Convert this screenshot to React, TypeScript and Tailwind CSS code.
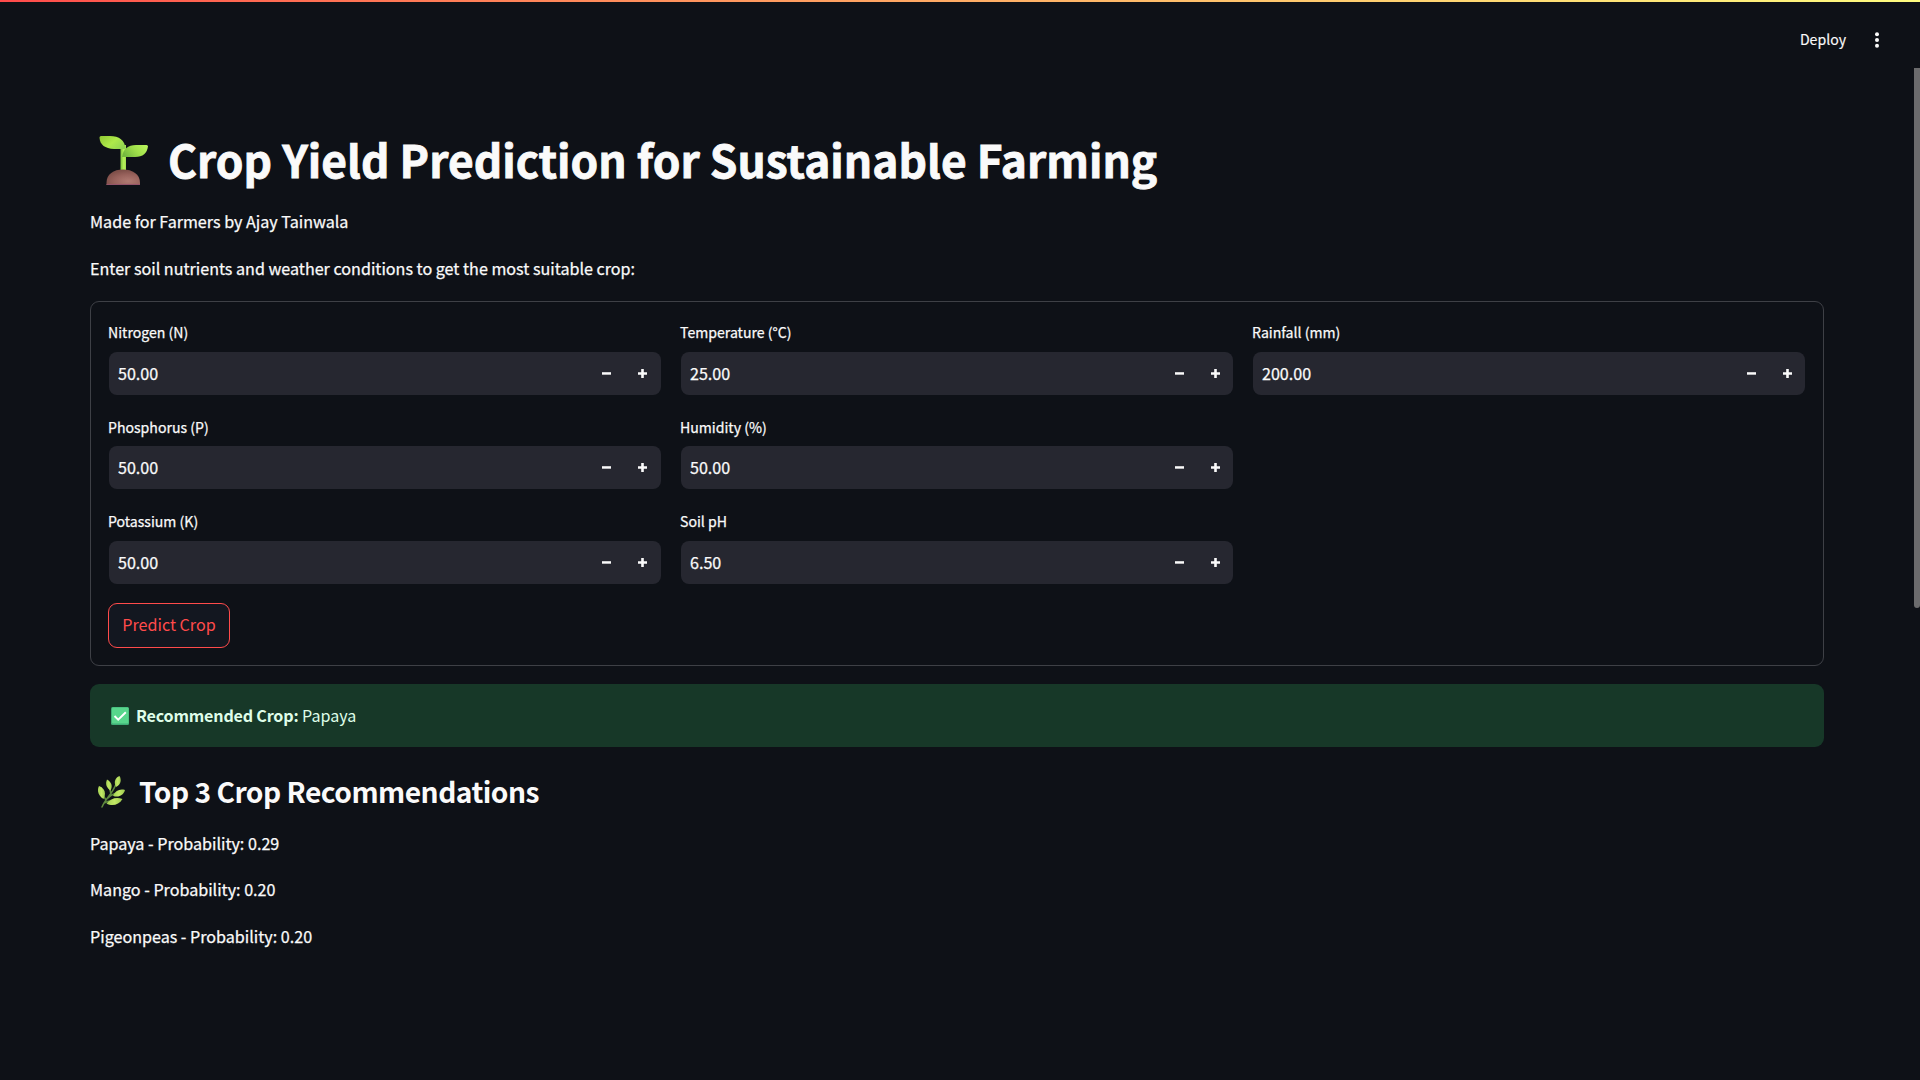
import React from "react";

type Field = { label: string; value: string };

const columns: Field[][] = [
  [
    { label: "Nitrogen (N)", value: "50.00" },
    { label: "Phosphorus (P)", value: "50.00" },
    { label: "Potassium (K)", value: "50.00" },
  ],
  [
    { label: "Temperature (°C)", value: "25.00" },
    { label: "Humidity (%)", value: "50.00" },
    { label: "Soil pH", value: "6.50" },
  ],
  [{ label: "Rainfall (mm)", value: "200.00" }],
];

const recommendations = [
  { crop: "Papaya", probability: "0.29" },
  { crop: "Mango", probability: "0.20" },
  { crop: "Pigeonpeas", probability: "0.20" },
];

function Sprout() {
  return (
    <svg width="49" height="49" viewBox="0 0 49 49" className="ml-[9px] mt-[7px] shrink-0">
      <defs>
        <linearGradient id="leafL" x1="0" y1="0.2" x2="1" y2="0.8">
          <stop offset="0" stopColor="#94cc36" />
          <stop offset="0.5" stopColor="#aeea4a" />
          <stop offset="1" stopColor="#8fd352" />
        </linearGradient>
        <linearGradient id="leafR" x1="0" y1="0.6" x2="1" y2="0.2">
          <stop offset="0" stopColor="#74b83f" />
          <stop offset="0.5" stopColor="#9fe04a" />
          <stop offset="1" stopColor="#b9f45c" />
        </linearGradient>
        <linearGradient id="stem" x1="0" y1="0" x2="1" y2="0">
          <stop offset="0" stopColor="#7cc23c" />
          <stop offset="0.6" stopColor="#b8f25a" />
          <stop offset="1" stopColor="#a2dc50" />
        </linearGradient>
        <radialGradient id="soil" cx="0.65" cy="0.75" r="0.7">
          <stop offset="0" stopColor="#b07a72" />
          <stop offset="0.6" stopColor="#98625c" />
          <stop offset="1" stopColor="#80504a" />
        </radialGradient>
      </defs>
      <rect x="21.500" y="9" width="5.500" height="26" fill="url(#stem)" />
      <path d="M7.500 49V47C7.500 38 14.500 33.500 24 33.500S41 38 41 47V49Z" fill="url(#soil)" />
      <path d="M7.500 48H41V49H7.500Z" fill="#95546a" />
      <path d="M0.500 1.500Q0.500 0 2 0H11C20 0 26 4 26.500 13H15C6 12.500 1 9 0.500 1.500Z" fill="url(#leafL)" />
      <path d="M23 21C24 13 29 9 37 9H47.500Q49 9 49 10.500C48 17 44 21 36 21Z" fill="url(#leafR)" />
    </svg>
  );
}

function Herb() {
  return (
    <svg width="27" height="32" viewBox="0 0 27 32" className="ml-[8px] mt-[4px] shrink-0">
      <defs>
        <linearGradient id="herb" x1="0" y1="0" x2="1" y2="0">
          <stop offset="0" stopColor="#a3d053" />
          <stop offset="0.5" stopColor="#c2e866" />
          <stop offset="1" stopColor="#9cc94e" />
        </linearGradient>
      </defs>
      <path
        d="M4 31C8 22 15 17 18 8M8 24L3 16M13 18L11 10M10 22Q15 17 21 17M6 27Q12 24 17 25"
        fill="none"
        stroke="#5f8a3f"
        strokeWidth="1.500"
        strokeLinecap="round"
      />
      <path d="M21.500 0C24 4 22.500 9 18 11C15.500 6 17 2 21.500 0Z" fill="url(#herb)" />
      <path d="M9 3.500C13.500 6 15 10 12.500 14.500C8.500 12 7 8 9 3.500Z" fill="url(#herb)" />
      <path d="M1 10C7 12 8.500 18 5.500 23C0.500 20 -1.500 14.500 1 10Z" fill="url(#herb)" />
      <path d="M27 14C25.500 19.500 20 22 15 19.700C17.500 14.500 22 12.500 27 14Z" fill="url(#herb)" />
      <path d="M24.500 23C21 29 14 30.500 8.500 27.500C12.500 22.500 18.500 20.500 24.500 23Z" fill="url(#herb)" />
    </svg>
  );
}

function CheckMark() {
  return (
    <svg width="18" height="18" viewBox="0 0 18 18" className="mr-[7px] shrink-0">
      <rect width="18" height="18" rx="1.500" fill="#3fae76" />
      <rect x="1" y="0.500" width="16.500" height="16" rx="1" fill="#58d68c" />
      <path d="M3.500 9L7.200 12.700L14.800 5.200" fill="none" stroke="#fff" strokeWidth="1.900" />
    </svg>
  );
}

function NumberField({ label, value, first }: Field & { first: boolean }) {
  return (
    <label className="flex flex-col">
      <span className="mt-[0.16px] mb-[6.84px] h-[26px] text-[14.1px] leading-[26px] [-webkit-text-stroke:0.25px]">
        {label}
      </span>
      <span
        className={
          first
            ? "mx-px flex h-[43px] items-center rounded-[8px] bg-[#262730] pr-px"
            : "mx-px flex h-[43px] items-center rounded-[8px] bg-[#262730]"
        }
      >
        <input
          className="h-[43px] min-w-0 flex-1 bg-transparent pb-[1.5px] pl-[9px] text-[16.1px] outline-none [-webkit-text-stroke:0.25px]"
          defaultValue={value}
        />
        <span className="flex h-[43px] w-9 items-center justify-center">
          <svg width="9" height="9" viewBox="0 0 9 9" className="block">
            <path d="M0 3.200H9V5.700H0Z" fill="#fafafa" />
          </svg>
        </span>
        <span className="flex h-[43px] w-9 items-center justify-center">
          <svg width="9" height="9" viewBox="0 0 9 9" className="block">
            <path d="M0 3.200H3.200V0H5.800V3.200H9V5.700H5.800V9H3.200V5.700H0Z" fill="#fafafa" />
          </svg>
        </span>
      </span>
    </label>
  );
}

export default function App() {
  return (
    <div className="relative h-screen w-full overflow-hidden bg-[#0e1117] font-['Noto_Sans_CJK_SC',sans-serif] text-[#fafafa]">
      <div className="h-[2px] bg-linear-to-r from-[#ff4b4b] to-[#fffd80]" />
      <header className="flex h-[66px] items-center justify-end pr-[41px]">
        <span className="mt-[7px] text-[14.1px] leading-[26px] [-webkit-text-stroke:0.15px]">Deploy</span>
        <svg width="4" height="16" viewBox="0 0 4 16" className="mt-[10px] ml-[29px] block">
          <circle cx="2" cy="2.200" r="2" fill="#fafafa" />
          <circle cx="2" cy="8" r="2" fill="#fafafa" />
          <circle cx="2" cy="13.800" r="2" fill="#fafafa" />
        </svg>
      </header>
      <div className="absolute top-[68px] right-0 h-[540px] w-[6px] rounded-b-[3px] bg-[#6b6b6d]" />

      <main className="pt-[61px] pr-24 pl-[90px]">
        <h1 className="flex h-[60px] text-[44.3px] leading-[60px] font-bold whitespace-nowrap [-webkit-text-stroke:0.8px]">
          <Sprout />
          <span className="ml-[20px]">Crop Yield Prediction for Sustainable Farming</span>
        </h1>
        <p className="mt-[18px] text-[16.12px] leading-[29px] [-webkit-text-stroke:0.25px]">
          Made for Farmers by Ajay Tainwala
        </p>
        <p className="mt-[18px] text-[16.12px] leading-[29px] [-webkit-text-stroke:0.25px]">
          Enter soil nutrients and weather conditions to get the most suitable crop:
        </p>

        <form className="mt-[18px] h-[365px] rounded-[9px] border border-[#3e4046] p-[17px]">
          <div className="grid grid-cols-3 gap-x-[18px]">
            {columns.map((fields, i) => (
              <div key={i} className="flex flex-col gap-[18.45px]">
                {fields.map((field) => (
                  <NumberField key={field.label} {...field} first={i === 0} />
                ))}
              </div>
            ))}
          </div>
          <button
            type="button"
            className="mt-[19px] flex h-[45px] w-[122px] items-center justify-center rounded-[9px] border border-[#ff4b4b] bg-[#131720] pb-[2px] text-[16.1px] text-[#ff4b4b]"
          >
            Predict Crop
          </button>
        </form>

        <div className="mt-[18px] flex h-[63px] items-center rounded-[9px] bg-[#173828] pl-[21px] text-[16.1px] text-[#dffde9]">
          <CheckMark />
          <p>
            <strong className="font-bold tracking-[-0.19px]">Recommended Crop:</strong> Papaya
          </p>
        </div>

        <h3 className="mt-[25px] flex h-[38px] text-[28.2px] leading-[38px] font-bold tracking-[-0.51px] whitespace-nowrap">
          <Herb />
          <span className="ml-[14px]">Top 3 Crop Recommendations</span>
        </h3>
        <div className="mt-[19px] flex flex-col gap-[17.3px] text-[16.12px] leading-[29px] [-webkit-text-stroke:0.25px]">
          {recommendations.map(({ crop, probability }) => (
            <p key={crop}>
              {crop} - Probability: {probability}
            </p>
          ))}
        </div>
      </main>
    </div>
  );
}
